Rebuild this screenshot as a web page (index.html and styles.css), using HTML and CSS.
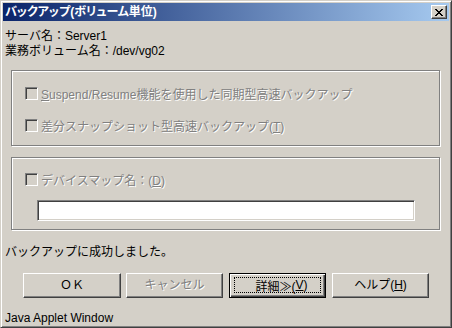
FILE: index.html
```html
<!DOCTYPE html>
<html lang="ja">
<head>
<meta charset="utf-8">
<link rel="stylesheet" href="styles.css">
</head>
<body>
<div class="window">
  <div class="titlebar">
    <span class="title">バックアップ(ボリューム単位)</span>
    <span class="close">
      <svg width="8" height="7" viewBox="0 0 8 7"><path d="M0 0h2v1h-2zM6 0h2v1h-2zM1 1h2v1h-2zM5 1h2v1h-2zM2 2h4v1h-4zM3 3h2v1h-2zM2 4h4v1h-4zM1 5h2v1h-2zM5 5h2v1h-2zM0 6h2v1h-2zM6 6h2v1h-2z" fill="#000"/></svg>
    </span>
  </div>
  <div class="info">
    <div class="line">サーバ名：Server1</div>
    <div class="line">業務ボリューム名：/dev/vg02</div>
  </div>
  <div class="group group1">
    <div class="check-row"><span class="cb"></span><span class="dis"><span class="u">S</span>uspend/Resume機能を使用した同期型高速バックアップ</span></div>
    <div class="check-row"><span class="cb"></span><span class="dis">差分スナップショット型高速バックアップ(<span class="u">T</span>)</span></div>
  </div>
  <div class="group group2">
    <div class="check-row"><span class="cb"></span><span class="dis">デバイスマップ名：(<span class="u">D</span>)</span></div>
    <div class="field"></div>
  </div>
  <div class="message">バックアップに成功しました。</div>
  <div class="buttons">
    <div class="btn w98"><span class="btn-label">ＯＫ</span></div>
    <div class="btn"><span class="btn-label dis">キャンセル</span></div>
    <div class="btn default"><span class="focus">詳細≫(<span class="u">V</span>)</span></div>
    <div class="btn"><span class="btn-label">ヘルプ(<span class="u">H</span>)</span></div>
  </div>
  <div class="footer">Java Applet Window</div>
</div>
</body>
</html>
```

FILE: styles.css
```css
* { box-sizing: border-box; }
html, body { margin: 0; padding: 0; background: #d4d0c8; }
body {
  font-family: "Liberation Sans", "Noto Sans CJK JP", sans-serif;
  font-size: 12px;
  color: #000;
}
.window {
  width: 452px;
  height: 328px;
  overflow: hidden;
  background: #d4d0c8;
  border: 1px solid;
  border-color: #d4d0c8 #404040 #404040 #d4d0c8;
  box-shadow: inset 1px 1px #fff, inset -1px -1px #808080;
  padding: 2px 2px 1px 2px;
}
.titlebar {
  height: 18px;
  background: linear-gradient(to right, #0a246a, #a6caf0);
  display: flex;
  align-items: center;
  justify-content: space-between;
  padding: 0 2px 0 2px;
}
.title {
  color: #fff;
  font-weight: bold;
  font-size: 12px;
  font-feature-settings: "palt";
  line-height: 18px;
}
.close {
  width: 16px;
  height: 14px;
  background: #d4d0c8;
  border: 1px solid;
  border-color: #fff #404040 #404040 #fff;
  box-shadow: inset -1px -1px #808080;
  display: flex;
  align-items: center;
  justify-content: center;
  padding-right: 1px;
}
.close svg { display: block; }
.info { margin-top: 8px; padding-left: 2px; }
.line { line-height: 15px; height: 15px; }
.group {
  width: 429px;
  margin-left: 8px;
  border: 1px solid #808080;
  box-shadow: inset 1px 1px #fff, 1px 1px #fff;
}
.group1 {
  margin-top: 11px;
  height: 76px;
  padding: 16px 0 0 13px;
  display: flex;
  flex-direction: column;
  gap: 19px;
}
.group2 {
  margin-top: 11px;
  height: 73px;
  padding: 15px 0 0 13px;
}
.check-row {
  display: flex;
  align-items: center;
  gap: 3px;
  height: 13px;
  white-space: nowrap;
}
.cb {
  width: 13px;
  height: 13px;
  flex: none;
  background: #d4d0c8;
  border: 1px solid;
  border-color: #808080 #fff #fff #808080;
  box-shadow: inset 1px 1px #404040, inset -1px -1px #d4d0c8;
}
.dis {
  color: #808080;
  text-shadow: 1px 1px 0 #fff;
}
.u { text-decoration: underline; text-underline-offset: 1px; }
.field {
  margin-top: 14px;
  margin-left: 12px;
  width: 378px;
  height: 21px;
  background: #fff;
  border: 1px solid;
  border-color: #808080 #fff #fff #808080;
  box-shadow: inset 1px 1px #404040, inset -1px -1px #d4d0c8;
}
.message {
  margin-top: 15px;
  padding-left: 2px;
  line-height: 15px;
  height: 15px;
}
.buttons {
  margin-top: 13px;
  margin-left: 20px;
  display: flex;
  gap: 6px;
}
.btn {
  width: 97px;
  height: 25px;
  background: #d4d0c8;
  border: 1px solid;
  border-color: #fff #404040 #404040 #fff;
  box-shadow: inset -1px -1px #808080;
  display: flex;
  align-items: center;
  justify-content: center;
}
.btn.w98 { width: 98px; margin-right: -1px; }
.btn.default {
  border: 1px solid #000;
  box-shadow: inset 1px 1px #fff, inset -1px -1px #404040, inset -2px -2px #808080;
  padding: 3px 4px 4px 4px;
  align-items: stretch;
}
.focus {
  flex: 1;
  border: 1px dotted #000;
  display: flex;
  align-items: center;
  justify-content: center;
  padding-left: 8px;
}
.btn-label { line-height: 15px; }
.footer {
  margin-top: 13px;
  padding-left: 2px;
  line-height: 15px;
}
```
